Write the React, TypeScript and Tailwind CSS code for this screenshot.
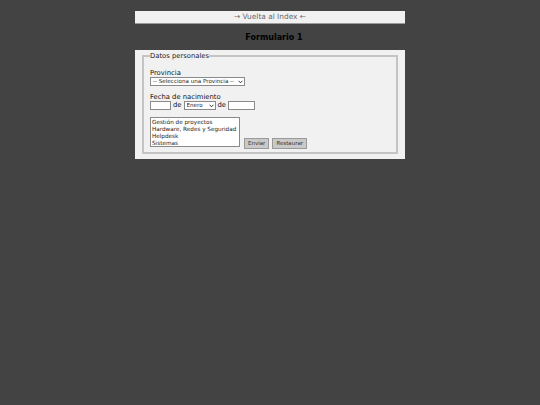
import React from "react";

const PROVINCIA_W = "w-[95px]";

function FakeSelect({ label, className }: { label: string; className: string }) {
  return (
    <div
      className={`flex h-[9px] items-center justify-between border border-[#8a8a8a] bg-white pl-[2px] pr-[1px] text-[5.6px] leading-none text-[#222] ${className}`}
    >
      <span className="truncate">{label}</span>
      <svg width="5" height="4" viewBox="0 0 5 4" className="ml-[1px] shrink-0" aria-hidden>
        <path d="M0.6 0.8 L2.5 2.8 L4.4 0.8" fill="none" stroke="#222" strokeWidth="0.9" />
      </svg>
    </div>
  );
}

function FakeInput({ className }: { className: string }) {
  return <div className={`h-[9px] border border-[#8a8a8a] bg-white ${className}`} />;
}

export default function App() {
  const areas = [
    "Gestión de proyectos",
    "Hardware, Redes y Seguridad",
    "Helpdesk",
    "Sistemas",
  ];

  return (
    <div
      className="min-h-[405px] bg-[#434343] pt-[11px] text-[#111]"
      style={{ fontFamily: '"DejaVu Sans", Verdana, sans-serif' }}
    >
      <div className="mx-auto w-[270px]">
        {/* ── Top link bar ─────────────────────── */}
        <div className="flex h-[13px] items-center justify-center border-b border-[#9c9c9c] bg-[#f1f1f1] text-[7.4px] text-[#6a6a6a]">
          → Vuelta al Index ←
        </div>

        <h1 className="mt-[6px] h-[16px] pl-[8px] text-center text-[8px] font-bold leading-[16px] text-black">
          Formulario 1
        </h1>

        {/* ── Form panel ─────────────────────── */}
        <div className="mt-[4px] bg-[#f1f1f1] px-[7px] pb-[5px] pt-[2px]">
          <fieldset className="border-2 border-[#c4c4c4] px-[6px] pb-[5px] pt-[3px]">
            <legend className="px-0 text-[6.8px] leading-[8px] text-[#222]">Datos personales</legend>

            <div className="mt-[6px] text-[6.8px] leading-[8px]">Provincia</div>
            <FakeSelect label="-- Selecciona una Provincia --" className={PROVINCIA_W} />

            <div className="mt-[7px] text-[6.8px] leading-[8px]">Fecha de nacimiento</div>
            <div className="flex items-center text-[6.8px] leading-none">
              <FakeInput className="w-[21px]" />
              <span className="mx-[2px]">de</span>
              <FakeSelect label="Enero" className="w-[32px]" />
              <span className="mx-[2px]">de</span>
              <FakeInput className="w-[27px]" />
            </div>

            <div className="mt-[7px] flex items-end gap-[4px]">
              <div className="h-[30px] w-[90px] border border-[#8a8a8a] bg-white px-[1px] pt-[1px] text-[5.7px] leading-[7px] text-[#222]">
                {areas.map((a) => (
                  <div key={a} className="truncate">
                    {a}
                  </div>
                ))}
              </div>
              <div className="mb-[-2px] flex gap-[3px]">
                <button className="h-[11px] border border-[#9a9a9a] bg-[#c9c9c9] px-[3px] text-[5.5px] leading-none text-[#333]">
                  Enviar
                </button>
                <button className="h-[11px] border border-[#9a9a9a] bg-[#c9c9c9] px-[3px] text-[5.5px] leading-none text-[#333]">
                  Restaurar
                </button>
              </div>
            </div>
          </fieldset>
        </div>
      </div>
    </div>
  );
}
